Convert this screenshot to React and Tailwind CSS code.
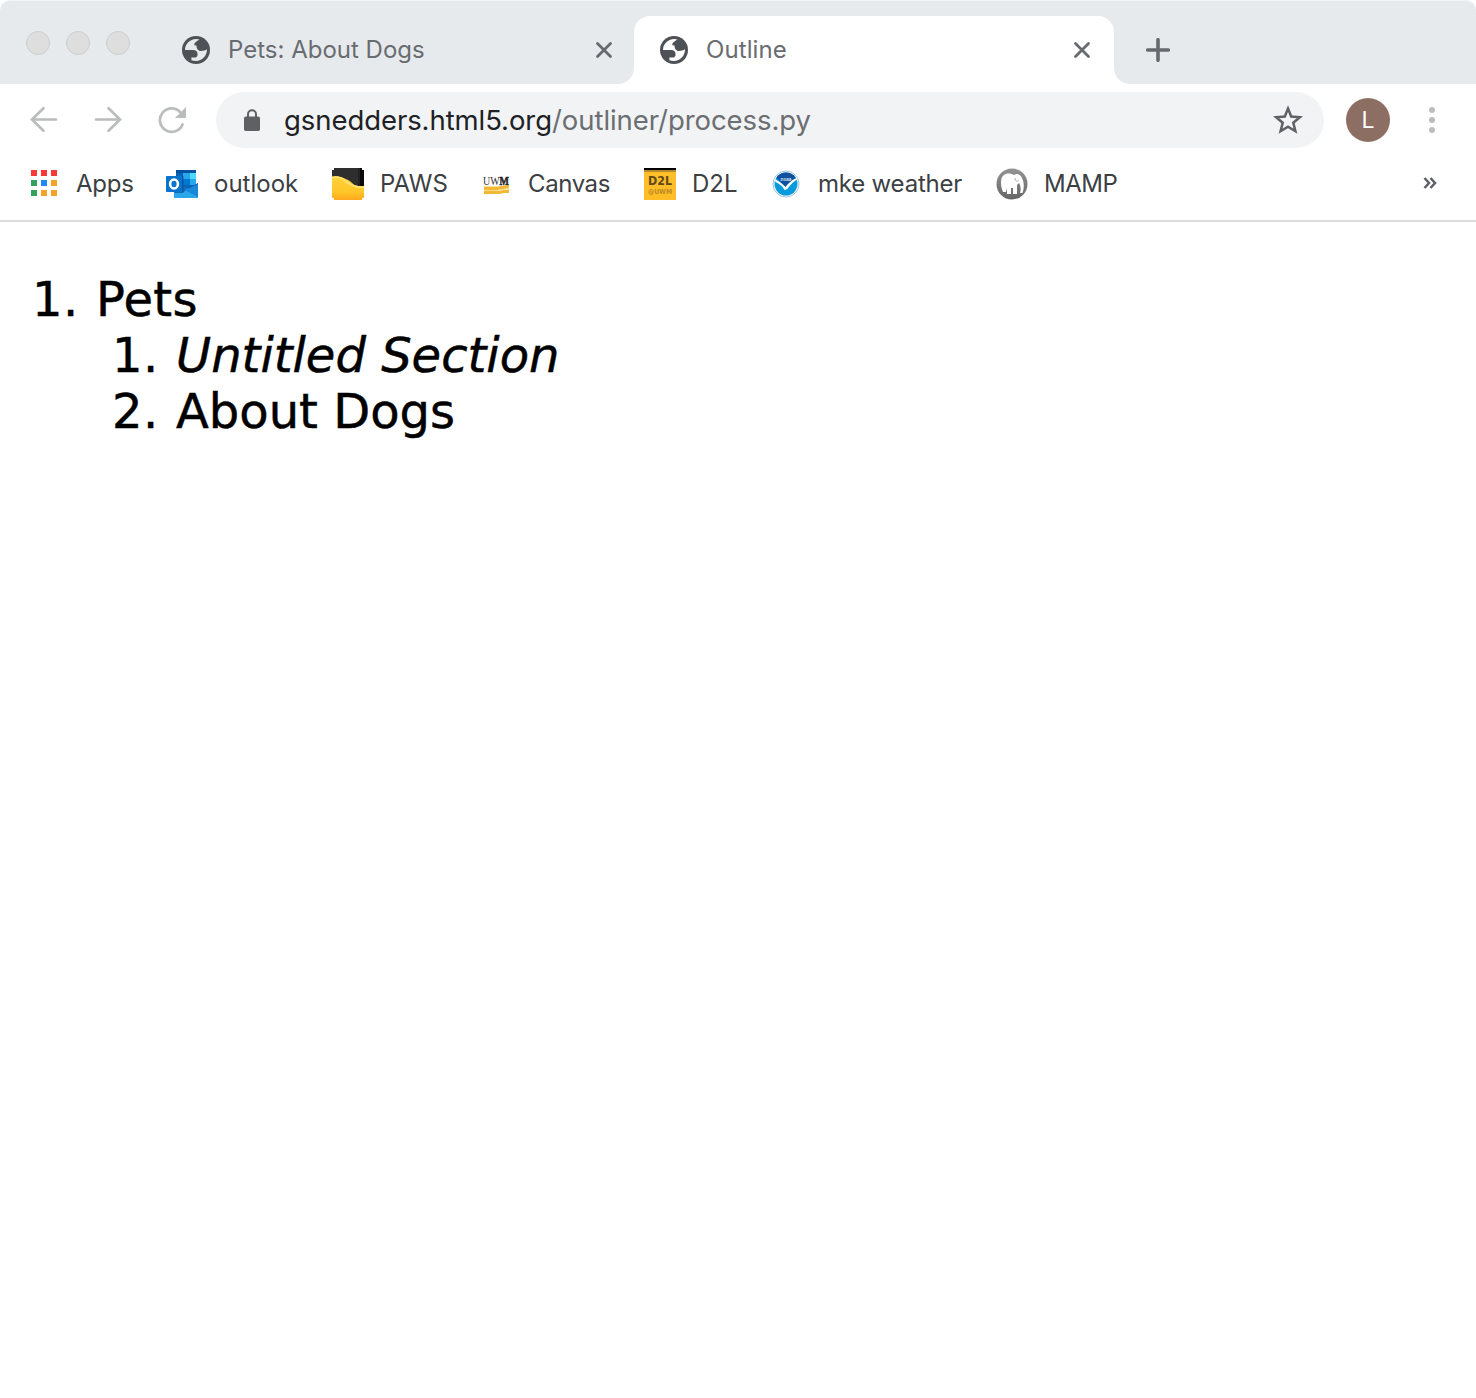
function Globe() {
  return (
    <svg className="size-7 shrink-0" viewBox="0 0 28 28">
      <circle cx="14" cy="14" r="14" fill="#4e5256" />
      <path d="M3 14C3 8 8 3 14 3c1.400 0 2.500.2 3.500.600C16 4.200 14.800 5.200 13.500 6.200 12.500 7 12.300 8 12.300 9.200L14.500 9.500C14.500 12.500 16 15 18.800 15 21.500 15 23.500 14.300 25 13.300 25 20 20 25 14 25c-1.800 0-3.400-.3-4.600-.8V21.500H14c1.100-.7 1.600-1.800 1.600-3.200C15.600 15.500 14 14 11 14z" fill="currentColor" />
    </svg>
  );
}
function Close() {
  return <svg className="size-5 shrink-0" viewBox="0 0 20 20"><path d="M3.500 3.500l13 13M16.500 3.500l-13 13" stroke="#66696d" strokeWidth="2.800" strokeLinecap="round" /></svg>;
}
function Apps() {
  const c = ["#f93939", "#f93939", "#f93939", "#34a15c", "#1f88f5", "#f3a426", "#34a15c", "#f3a426", "#f3a426"];
  return (
    <span className="mb-[2px] ml-px grid grid-cols-3 gap-1">
      {c.map((x, i) => <i key={i} className="size-[6px]" style={{ background: x }} />)}
    </span>
  );
}
function Outlook() {
  return (
    <svg className="size-8" viewBox="0 0 32 32">
      <path d="M10 2h20v18H10z" fill="#0a64b5" /><path d="M10 2h20v3H10z" fill="#0552a0" />
      <path d="M17 5h7v6h-7z" fill="#28a8ea" /><path d="M24 5h6v6h-6z" fill="#50d9ff" /><path d="M17 11h7v6h-7z" fill="#0078d4" /><path d="M24 11h6v6h-6z" fill="#28a8ea" />
      <path d="M32 15v6H20z" fill="#0f5cad" /><path d="M8 17l9 3 15 10H8z" fill="#28a8ea" /><path d="M16 17l6 4-6 4z" fill="#0f6fc4" /><path d="M32 16v14L19 22z" fill="#1687d9" />
      <path d="M10 8h7.500v17H8v-2z" fill="#064a8c" opacity=".6" /><rect y="8" width="16" height="16" rx="1" fill="#0773cd" />
      <ellipse cx="8" cy="16" rx="3.900" ry="4.500" fill="none" stroke="#fff" strokeWidth="2.600" />
    </svg>
  );
}
function Paws() {
  return (
    <svg className="size-8" viewBox="0 0 32 32">
      <defs><linearGradient id="paw" x2="0" y2="1"><stop offset=".3" stopColor="#ffd23a" /><stop offset=".75" stopColor="#ffc529" /><stop offset="1" stopColor="#ffa91f" /></linearGradient></defs>
      <path d="M2 0h28v2h2v28h-2v2H2v-2H0V2h2z" fill="url(#paw)" />
      <path d="M2 0h28v2h2v16h-6c-4 0-6-4-10-6-5-3-10-4-16-3V2h2z" fill="#2f2e2e" />
      <path d="M30 0v2h2v16h-4V0z" fill="#0a0a0a" /><path d="M26 0h2v18h-2z" fill="#222" />
      <path d="M0 9.500c10-2 13 4 18 6.500 5 3.500 8 3 14 3" fill="none" stroke="#ffe06c" strokeWidth="2" />
    </svg>
  );
}
function Uwm() {
  return (
    <svg className="size-8 overflow-visible" viewBox="0 0 32 32">
      <text x="3" y="16.500" fontFamily="Liberation Serif" fontSize="13" fill="#333" textLength="26" lengthAdjust="spacingAndGlyphs">UW<tspan fontWeight="700" stroke="#222" strokeWidth=".6">M</tspan></text>
      <path d="M4 18.500h13c4 0 7-1.500 12-1.500v3.500c-5 0-8 1.500-12 1.500H4zM4 23h12c5 0 8-1.500 13-1.500V25c-5 0-8 .5-10 1H4z" fill="#f3b935" />
      <path d="M4 22.500h13l12-2.200" fill="none" stroke="#fad985" />
    </svg>
  );
}
function D2L() {
  return (
    <svg className="size-8 overflow-visible" viewBox="0 0 32 32">
      <path d="M0 0h32v32H0z" fill="#ffbd27" /><path d="M0 0h32v2H0z" fill="#000" /><path d="M0 2h32v2H0z" fill="#b58a2d" />
      <text x="4" y="17" fontFamily="DejaVu Sans" fontWeight="700" fontSize="13" fill="#60491b" textLength="24" lengthAdjust="spacingAndGlyphs">D2L</text>
      <text x="4" y="25.500" fontFamily="DejaVu Sans" fontWeight="700" fontSize="7" fill="#bb8b22" textLength="24" lengthAdjust="spacingAndGlyphs">@UWM</text>
    </svg>
  );
}
function Noaa() {
  return (
    <svg className="size-8" viewBox="0 0 32 32">
      <circle cx="16" cy="16" r="13" fill="#fff" stroke="#9fc4df" />
      <circle cx="16" cy="16" r="11.500" fill="#079bde" />
      <path d="M6.500 9.500A11.500 11.500 0 0 1 25.500 9.500L18 19h-3z" fill="#10509f" />
      <path d="M4.500 11c5 2 8 5 11 8 3-4 7-8 12-9l-1 2c-4 2-7 6-9 9l-3 1c-2-4-5-6-9-8z" fill="#fff" />
      <text x="10.500" y="12.500" fontFamily="Liberation Sans" fontWeight="700" fontSize="5.500" fill="#d4e3f3" textLength="11" lengthAdjust="spacingAndGlyphs">noaa</text>
    </svg>
  );
}
function Mamp() {
  return (
    <svg className="size-8" viewBox="0 0 32 32">
      <defs><linearGradient id="mamp" x2="0" y2="1"><stop stopColor="#949494" /><stop offset="1" stopColor="#666" /></linearGradient></defs>
      <circle cx="16" cy="16" r="15.500" fill="url(#mamp)" />
      <path d="M5 15c0-7 3-9.500 8-9.500 2 0 3 .5 5 1.500 3-2 6-1 8 3 2 4 2.500 9 .5 15H24c1-3 1-7-1-10l-2 2v9h-4v-6h-2v6h-4v-6l-1 4H7c-1-3-2-5-2-9z" fill="#fff" />
      <path d="M19 10c0 3 2 4 3.500 2.500" fill="none" stroke="#aaa" />
    </svg>
  );
}
const bookmarks = [
  { label: "Apps", icon: <Apps />, w: "w-[136px]", t: "ml-[19px] tracking-[-0.2px]" },
  { label: "outlook", icon: <Outlook />, w: "w-[166px]", t: "ml-4" },
  { label: "PAWS", icon: <Paws />, w: "w-[148px]", t: "ml-4" },
  { label: "Canvas", icon: <Uwm />, w: "w-[164px]", t: "ml-4 tracking-[-0.4px]" },
  { label: "D2L", icon: <D2L />, w: "w-[126px]", t: "ml-4" },
  { label: "mke weather", icon: <Noaa />, w: "w-[226px]", t: "ml-4 tracking-[-0.2px]" },
  { label: "MAMP", icon: <Mamp />, w: "w-[150px]", t: "ml-4 tracking-[-0.5px]" },
];
export default function App() {
  return (
    <div className="h-[1398px] w-[1476px] overflow-hidden bg-white font-['Inter',sans-serif]">
      <header>
        <div className="flex h-[84px] items-end rounded-t-[10px] border-t border-[#f1f3f4] bg-[#e6eaed] text-[24px] text-[#696c70]">
          <div className="mb-[29px] flex w-[182px] gap-4 pl-[26px]">
            {[0, 1, 2].map((i) => <span key={i} className="size-6 rounded-full border border-[#cdcdcd] bg-[#dedede]" />)}
          </div>
          <div className="flex h-[68px] w-[452px] items-center pr-5">
            <span className="flex text-[#e6eaed]"><Globe /></span>
            <span className="ml-[18px] grow">Pets: About Dogs</span>
            <Close />
          </div>
          <div className="relative flex h-[68px] w-[480px] items-center rounded-t-[16px] bg-white pl-[26px] pr-[22px]">
            <svg className="absolute -left-4 bottom-0 size-4" viewBox="0 0 16 16"><path d="M16 0v16H0A16 16 0 0 0 16 0" fill="#fff" /></svg>
            <svg className="absolute -right-4 bottom-0 size-4" viewBox="0 0 16 16"><path d="M0 0v16h16A16 16 0 0 1 0 0" fill="#fff" /></svg>
            <span className="flex text-white"><Globe /></span>
            <span className="ml-[18px] grow tracking-[0.1px]">Outline</span>
            <Close />
          </div>
          <svg className="mb-[22px] ml-8 size-6" viewBox="0 0 24 24"><path d="M12 1.700v20.600M1.700 12h20.600" stroke="#66696d" strokeWidth="3.600" strokeLinecap="round" /></svg>
        </div>
        <div className="flex h-[72px] items-center">
          <svg className="ml-[30px] size-7" viewBox="0 0 28 28"><path d="M26 13.500H3M13.500 2.200L2 13.500l11.500 11.300" fill="none" stroke="#babcbe" strokeWidth="2.700" strokeLinecap="round" /></svg>
          <svg className="ml-9 size-7" viewBox="0 0 28 28"><path d="M2 13.500h23M14.500 2.200L26 13.500 14.500 24.800" fill="none" stroke="#babcbe" strokeWidth="2.700" strokeLinecap="round" /></svg>
          <svg className="ml-9 size-7" viewBox="0 0 28 28"><path d="M22.500 6.500A11.700 11.700 0 1 0 24.500 18.500" fill="none" stroke="#babcbe" strokeWidth="2.700" strokeLinecap="round" /><path d="M28 1v11H17z" fill="#babcbe" /></svg>
          <div className="ml-[30px] flex h-14 w-[1108px] items-center rounded-full bg-[#f1f3f4] pl-7 pr-5">
            <svg className="h-[22px] w-4" viewBox="0 0 16 22"><rect y="7.500" width="16" height="14.500" rx="1.800" fill="#5f6063" /><path d="M4 8.500V5.200a4 4 0 0 1 8 0v3.300" fill="none" stroke="#5f6063" strokeWidth="2" /></svg>
            <span className="ml-6 whitespace-nowrap text-[27.500px] leading-8 tracking-[-0.070px] text-[#202124]">gsnedders.html5.org<span className="text-[#6b6e72]">/outliner/process.py</span></span>
            <svg className="ml-auto size-8" viewBox="0 0 32 32"><path d="M16 4.500l3.200 8 8.700.700-6.600 5.600 2.100 8.400-7.400-4.500-7.400 4.500 2.100-8.400-6.600-5.600 8.700-.7z" fill="none" stroke="#5f6063" strokeWidth="2.500" /></svg>
          </div>
          <span className="ml-[22px] flex size-11 items-center justify-center rounded-full bg-[#8d6e63] pt-px text-[23px] text-white">L</span>
          <span className="ml-[39px] flex flex-col gap-1">{[0, 1, 2].map((i) => <i key={i} className="size-[6px] rounded-full bg-[#babcbe]" />)}</span>
        </div>
        <div className="flex h-[66px] border-b-2 border-[#dadce0] pl-[30px] text-[24px] text-[#3c4043]">
          {bookmarks.map((b) => (
            <div key={b.label} className={"flex h-14 items-center whitespace-nowrap " + b.w}>
              {b.icon}
              <span className={b.t}>{b.label}</span>
            </div>
          ))}
          <svg className="ml-auto mr-[39px] mt-5 size-[14px]" viewBox="0 0 14 14"><path d="M1.500 2l4.500 5-4.500 5M7.500 2l4.500 5-4.500 5" fill="none" stroke="#5f6368" strokeWidth="2.600" /></svg>
        </div>
      </header>
      <main className="pt-[49px] font-['DejaVu_Sans',sans-serif] text-[48px] leading-[56px] text-black [-webkit-text-stroke:0.500px_black]">
        <ol className="ml-[32px]">
          <li><div className="flex"><span className="w-[64px] tracking-[0.500px]">1.</span><span className="tracking-[0.300px]">Pets</span></div>
            <ol className="ml-[80px]">
              <li className="flex"><span className="w-[64px] tracking-[0.500px]">1.</span><em>Untitled Section</em></li>
              <li className="flex"><span className="w-[64px] tracking-[0.500px]">2.</span><span>About Dogs</span></li>
            </ol>
          </li>
        </ol>
      </main>
    </div>
  );
}
